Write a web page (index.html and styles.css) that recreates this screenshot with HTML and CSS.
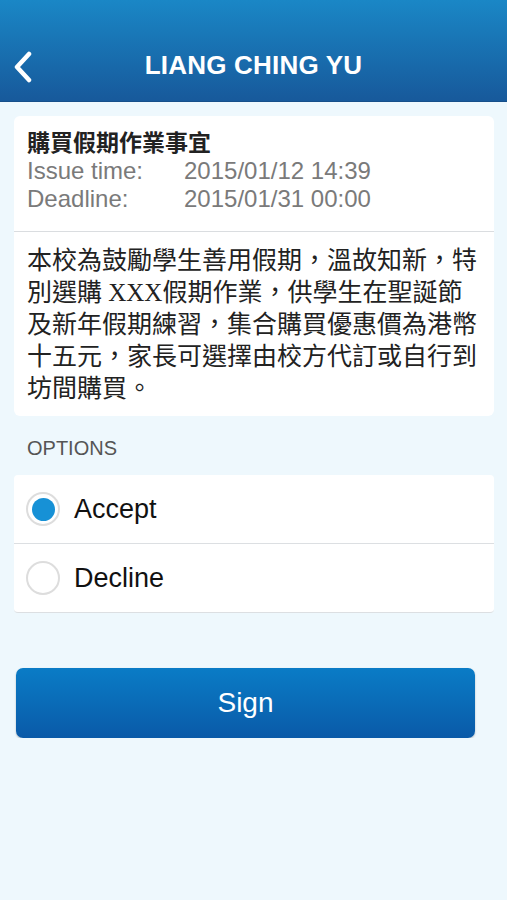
FILE: index.html
```html
<!DOCTYPE html>
<html lang="zh-Hant">
<head>
  <meta charset="UTF-8" />
  <meta name="viewport" content="width=device-width, initial-scale=1.0"/>
  <title>LIANG CHING YU</title>
  <link rel="stylesheet" href="styles.css">
</head>
<body>

  <header class="topbar">
    <span class="back">
      <svg width="22" height="32" viewBox="0 0 22 32">
        <path d="M17 3 L5 16 L17 29" fill="none" stroke="#fff" stroke-width="4.5" stroke-linecap="round" stroke-linejoin="round"/>
      </svg>
    </span>
    <h1>LIANG CHING YU</h1>
  </header>

  <main class="content">
    <section class="card">
      <div class="card-head">
        <div class="notice-title">購買假期作業事宜</div>
        <div class="meta"><span class="meta-label">Issue time:</span><span>2015/01/12 14:39</span></div>
        <div class="meta"><span class="meta-label">Deadline:</span><span>2015/01/31 00:00</span></div>
      </div>
      <div class="card-body">
        本校為鼓勵學生善用假期，溫故知新，特<br>
        別選購 XXX假期作業，供學生在聖誕節<br>
        及新年假期練習，集合購買優惠價為港幣<br>
        十五元，家長可選擇由校方代訂或自行到<br>
        坊間購買。
      </div>
    </section>

    <div class="section-label">OPTIONS</div>

    <section class="options">
      <div class="option">
        <span class="radio checked"></span>
        <span>Accept</span>
      </div>
      <div class="option">
        <span class="radio"></span>
        <span>Decline</span>
      </div>
    </section>

    <button class="sign">Sign</button>
  </main>

</body>
</html>
```

FILE: styles.css
```css
body {
  margin: 0;
  background: #eef8fd;
  font-family: 'Liberation Sans', 'Noto Sans CJK TC', sans-serif;
  color: #222;
}

.topbar {
  height: 102px;
  background: linear-gradient(#1a87c6, #17599b);
  border-bottom: 1px solid #164f8a;
  display: flex;
  align-items: flex-end;
  justify-content: center;
  position: relative;
  box-sizing: border-box;
  padding-bottom: 20px;
}

.topbar h1 {
  margin: 0;
  color: #fff;
  font-size: 26px;
  font-weight: bold;
  letter-spacing: 0.2px;
}

.back {
  position: absolute;
  left: 12px;
  top: 51px;
}

.content {
  padding: 14px 13px 0 14px;
}

.card {
  background: #fff;
  border-radius: 6px;
}

.card-head {
  padding: 13px 13px 18px;
  border-bottom: 1px solid #dadde0;
}

.notice-title {
  font-size: 23px;
  font-weight: bold;
  line-height: 28px;
  color: #222;
}

.meta {
  font-size: 24px;
  line-height: 28px;
  color: #7a7a7a;
  display: flex;
}

.meta-label {
  width: 157px;
}

.card-body {
  padding: 13px 13px 11px;
  font-size: 25px;
  line-height: 32px;
  color: #222;
  font-family: 'Liberation Serif', 'Noto Sans CJK TC', sans-serif;
}

.section-label {
  font-size: 20px;
  color: #555;
  padding: 21px 13px 15px;
}

.options {
  background: #fff;
  border-radius: 4px;
  border-bottom: 1px solid #dcdfe2;
}

.option {
  display: flex;
  align-items: center;
  gap: 14px;
  height: 68px;
  padding-left: 12px;
  font-size: 27px;
  color: #111;
}

.option + .option {
  border-top: 1px solid #dcdfe2;
}

.radio {
  width: 34px;
  height: 34px;
  border: 2px solid #dddddd;
  border-radius: 50%;
  box-sizing: border-box;
  display: flex;
  align-items: center;
  justify-content: center;
}

.radio.checked::after {
  content: "";
  width: 23px;
  height: 23px;
  border-radius: 50%;
  background: #1791d6;
}

.sign {
  display: block;
  margin: 55px 0 0 2px;
  width: 459px;
  height: 70px;
  border: none;
  border-radius: 7px;
  background: linear-gradient(#0a7cc6, #0a5aa8);
  box-shadow: 0 1px 2px rgba(0, 0, 0, 0.25);
  color: #fff;
  font-family: 'Liberation Sans', sans-serif;
  font-size: 28px;
}
```
